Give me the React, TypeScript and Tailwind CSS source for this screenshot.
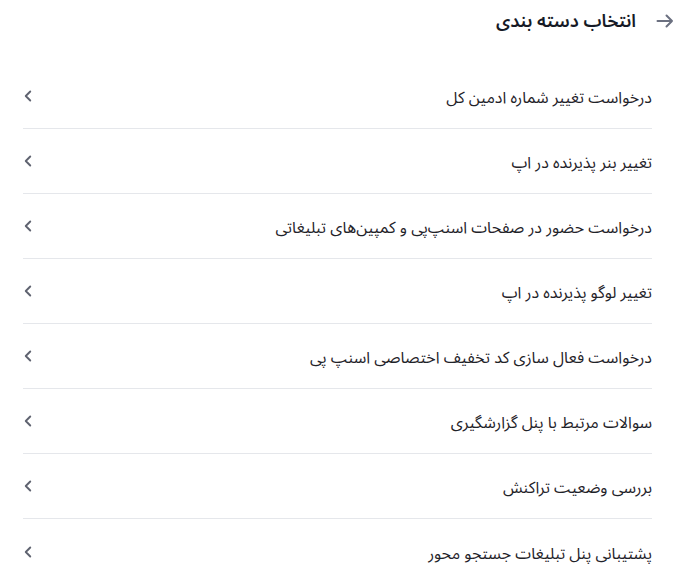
import React from 'react';
import { ChevronLeft } from 'lucide-react';

const categories: string[] = [
  'درخواست تغییر شماره ادمین کل',
  'تغییر بنر پذیرنده در اپ',
  'درخواست حضور در صفحات اسنپ‌پی و کمپین‌های تبلیغاتی',
  'تغییر لوگو پذیرنده در اپ',
  'درخواست فعال سازی کد تخفیف اختصاصی اسنپ پی',
  'سوالات مرتبط با پنل گزارشگیری',
  'بررسی وضعیت تراکنش',
  'پشتیبانی پنل تبلیغات جستجو محور',
];

const BackArrow = () => (
  <svg width="18" height="14" viewBox="0 0 18 14" fill="none" className="text-[#6b7080]">
    <path d="M1.5 7h14.5M10.5 1.5 16 7l-5.5 5.5" stroke="currentColor" strokeWidth="2" strokeLinecap="round" strokeLinejoin="round" />
  </svg>
);

const App: React.FC = () => {
  return (
    <div
      dir="rtl"
      className="min-h-screen bg-white text-[#1f2329]"
      style={{ fontFamily: '"Noto Sans Arabic", "DejaVu Sans", sans-serif' }}
    >
      {/* header */}
      <div className="flex items-center gap-[20px] pr-[12px] pt-[2px] h-[40px]">
        <BackArrow />
        <h1 className="text-[18px] font-semibold text-[#161a26]">انتخاب دسته بندی</h1>
      </div>

      {/* list */}
      <ul className="mt-[24px] pr-[34px] pl-[23px]">
        {categories.map((title, i) => (
          <li
            key={i}
            className={
              'flex items-center justify-between h-[65px] ' +
              (i < categories.length - 1 ? 'border-b border-[#e5e7eb]' : '')
            }
          >
            <span className="text-[16px] pt-[4px]">{title}</span>
            <ChevronLeft className="w-[18px] h-[18px] -ml-[4px] text-[#5f6370]" strokeWidth={2.5} />
          </li>
        ))}
      </ul>
    </div>
  );
};

export default App;
